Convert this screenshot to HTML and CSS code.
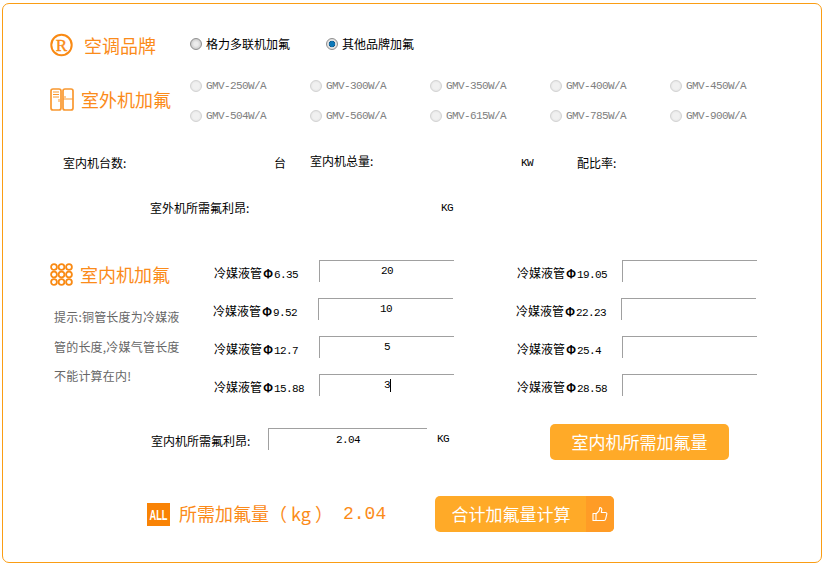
FILE: index.html
```html
<!DOCTYPE html>
<html lang="zh-CN">
<head>
<meta charset="utf-8">
<title>加氟量计算</title>
<link rel="stylesheet" href="styles.css">
</head>
<body>
<main class="card">
  <section class="brand-row">
    <div class="head">
      <svg class="icon" width="23" height="24" viewBox="0 0 23 24"><circle cx="11.5" cy="12" r="10.2" fill="none" stroke="#f98a14" stroke-width="2"/><text class="icon-r" x="11.5" y="18" text-anchor="middle">R</text></svg>
      <h2 class="title title-brand">空调品牌</h2>
    </div>
    <label class="choice choice-first"><input class="radio" type="radio" name="brand"><span>格力多联机加氟</span></label>
    <label class="choice"><input class="radio" type="radio" name="brand" checked><span>其他品牌加氟</span></label>
  </section>

  <section class="outdoor">
    <div class="head">
      <svg class="icon" width="24" height="23" viewBox="0 0 24 23"><g fill="none" stroke="#f9982f" stroke-width="1.7"><rect x="1" y="1" width="10" height="21" rx="2"/><rect x="13" y="1" width="10" height="21" rx="2"/><path d="M3 4h6M3 6.5h6M3 9h6M13 11h10M9 11v3M15 8v2" stroke-width="1"/></g></svg>
      <h2 class="title">室外机加氟</h2>
    </div>
    <div class="models">
      <label class="model"><input class="radio" type="radio" disabled><span>GMV-250W/A</span></label>
      <label class="model"><input class="radio" type="radio" disabled><span>GMV-300W/A</span></label>
      <label class="model"><input class="radio" type="radio" disabled><span>GMV-350W/A</span></label>
      <label class="model"><input class="radio" type="radio" disabled><span>GMV-400W/A</span></label>
      <label class="model"><input class="radio" type="radio" disabled><span>GMV-450W/A</span></label>
      <label class="model"><input class="radio" type="radio" disabled><span>GMV-504W/A</span></label>
      <label class="model"><input class="radio" type="radio" disabled><span>GMV-560W/A</span></label>
      <label class="model"><input class="radio" type="radio" disabled><span>GMV-615W/A</span></label>
      <label class="model"><input class="radio" type="radio" disabled><span>GMV-785W/A</span></label>
      <label class="model"><input class="radio" type="radio" disabled><span>GMV-900W/A</span></label>
    </div>
  </section>

  <section class="stats">
    <span class="stat-label">室内机台数:</span>
    <span class="stat-unit">台</span>
    <span class="stat-label raised">室内机总量:</span>
    <span class="stat-unit-kw mono">KW</span>
    <span>配比率:</span>
  </section>

  <section class="need">
    <span class="need-label">室外机所需氟利昂:</span>
    <span class="mono">KG</span>
  </section>

  <section class="indoor">
    <div class="side">
      <div class="head">
        <svg class="icon" width="23" height="23" viewBox="0 0 23 23"><g fill="none" stroke="#f98a14" stroke-width="1.8"><circle cx="4" cy="4" r="2.9"/><circle cx="11.5" cy="4" r="2.9"/><circle cx="19" cy="4" r="2.9"/><circle cx="4" cy="11.5" r="2.9"/><circle cx="11.5" cy="11.5" r="2.9"/><circle cx="19" cy="11.5" r="2.9"/><circle cx="4" cy="19" r="2.9"/><circle cx="11.5" cy="19" r="2.9"/><circle cx="19" cy="19" r="2.9"/></g></svg>
        <h2 class="title">室内机加氟</h2>
      </div>
      <p class="hint">提示:铜管长度为冷媒液<br>管的长度,冷媒气管长度<br>不能计算在内!</p>
    </div>
    <div class="pipes">
      <div class="pipe"><span class="pipe-label">冷媒液管<span class="phi">Φ</span><span class="mono">6.35</span></span><input class="field" value="20"></div>
      <div class="pipe"><span class="pipe-label">冷媒液管<span class="phi">Φ</span><span class="mono">19.05</span></span><input class="field"></div>
      <div class="pipe shift"><span class="pipe-label">冷媒液管<span class="phi">Φ</span><span class="mono">9.52</span></span><input class="field" value="10"></div>
      <div class="pipe shift"><span class="pipe-label">冷媒液管<span class="phi">Φ</span><span class="mono">22.23</span></span><input class="field"></div>
      <div class="pipe"><span class="pipe-label">冷媒液管<span class="phi">Φ</span><span class="mono">12.7</span></span><input class="field" value="5"></div>
      <div class="pipe"><span class="pipe-label">冷媒液管<span class="phi">Φ</span><span class="mono">25.4</span></span><input class="field"></div>
      <div class="pipe"><span class="pipe-label">冷媒液管<span class="phi">Φ</span><span class="mono">15.88</span></span><span class="field-wrap"><input class="field" value="3"><span class="caret"></span></span></div>
      <div class="pipe"><span class="pipe-label">冷媒液管<span class="phi">Φ</span><span class="mono">28.58</span></span><input class="field"></div>
    </div>
  </section>

  <section class="result">
    <span class="result-label">室内机所需氟利昂:</span>
    <input class="field field-wide" value="2.04">
    <span class="result-unit mono">KG</span>
    <button class="btn" type="button">室内机所需加氟量</button>
  </section>

  <section class="total">
    <svg class="icon-all" width="23" height="23" viewBox="0 0 23 23"><rect width="23" height="23" fill="#f98305"/><text class="all-text" text-anchor="middle" transform="translate(11.5 17) scale(.62 1)">ALL</text></svg>
    <h2 class="title total-title">所需加氟量（ kg ）</h2>
    <span class="total-value">2.04</span>
    <button class="btn btn-split" type="button">
      <span class="btn-text">合计加氟量计算</span>
      <span class="btn-thumb"><svg width="16" height="16" viewBox="0 0 16 16"><path d="M1 7.5h3v7H1zM4 8l3-3.2.8-3.3c1.6 0 2.2 1.2 1.9 2.7L9.3 6.5h4.2c1 0 1.5.8 1.3 1.7l-1.2 5c-.2.8-.8 1.3-1.6 1.3H4" fill="none" stroke="#fff" stroke-width="1.1" stroke-linejoin="round"/></svg></span>
    </button>
  </section>
</main>
</body>
</html>
```
FILE: styles.css
```css
* { box-sizing: border-box; }
html, body { margin: 0; padding: 0; background: #fff; }
body { font: 12px/26px "Noto Sans CJK SC", "Liberation Sans", sans-serif; color: #000; }

.card {
  width: 820px;
  height: 560px;
  margin: 3px 0 0 2px;
  padding-top: 28px;
  border: 1px solid #fa9d14;
  border-radius: 7px;
  display: flex;
  flex-direction: column;
}

.mono {
  font-family: "Liberation Mono", monospace;
  font-size: 11px;
  letter-spacing: -0.6px;
}

.head { display: flex; align-items: center; }
.title {
  margin: 0 0 0 7px;
  font-size: 18px;
  font-weight: 400;
  line-height: 24px;
  color: #fb8b1a;
  white-space: nowrap;
}
.title-brand { margin-left: 11px; }

.radio {
  appearance: none;
  flex: none;
  width: 12px;
  height: 12px;
  margin: 0;
  border: 1px solid #8f8f8f;
  border-radius: 50%;
  background: radial-gradient(circle, #ececec 0 2px, #b8b8b8 100%);
}
.radio:checked { background: radial-gradient(circle, #0b78b8 0 2.5px, #1c4f78 3px, #e8e8e8 3.6px, #cfcfcf 100%); }
.radio:disabled { border-color: #d2d2d2; background: radial-gradient(circle, #f0f0f0 0 3px, #dedede 100%); }

.brand-row { display: flex; align-items: center; height: 25px; padding-left: 47px; }
.brand-row .head { width: 140px; }
.choice { display: flex; align-items: center; gap: 4px; width: 136px; margin-bottom: 2px; }

.outdoor { display: flex; align-items: center; height: 60px; margin-top: 14px; padding-left: 47px; }
.outdoor .head { width: 140px; margin-bottom: 4px; }
.models { display: grid; grid-template-columns: repeat(5, 120px); grid-auto-rows: 30px; }
.model { display: flex; align-items: center; gap: 4px; color: #808080; font-family: "Liberation Mono", monospace; font-size: 11px; letter-spacing: -0.6px; }

.stats { display: flex; height: 26px; margin-top: 19px; padding-left: 60px; }
.stat-label { width: 211px; }
.stat-unit { width: 36px; }
.stat-unit-kw { width: 56px; }
.raised { margin-top: -2px; }

.need { display: flex; height: 26px; margin-top: 19px; padding-left: 147px; }
.need-label { width: 291px; }

.indoor { display: flex; margin-top: 39px; padding-left: 47px; }
.side { width: 164px; }
.side .head { height: 28px; }
.hint { margin: 14px 0 0 4px; color: #666; line-height: 29.5px; letter-spacing: .2px; white-space: nowrap; }
.pipes { display: grid; grid-template-columns: repeat(2, 303px); grid-auto-rows: 38px; }
.pipe { display: flex; align-items: flex-start; }
.shift { margin-left: -1px; }
.pipe-label { flex: none; width: 105px; white-space: nowrap; }
.phi { display: inline-block; width: 12px; text-align: center; font-weight: 700; font-size: 12px; }

.field {
  display: block;
  flex: none;
  width: 135px;
  height: 22px;
  padding: 0 0 2px;
  border: 0;
  border-top: 1px solid #a0a0a0;
  border-left: 1px solid #a0a0a0;
  background: #fff;
  outline: none;
  text-align: center;
  font-family: "Liberation Mono", monospace;
  font-size: 11px;
  letter-spacing: -0.6px;
  color: #000;
}
.field-wrap { position: relative; display: block; flex: none; }
.caret { position: absolute; left: 71px; top: 5px; width: 1px; height: 13px; background: #000; }

.result { display: flex; align-items: flex-start; height: 36px; margin-top: 12px; padding-left: 148px; }
.result-label { width: 117px; margin-top: 4px; }
.field-wide { width: 159px; margin-top: 4px; padding-bottom: 0; }
.result-unit { width: 113px; margin: 2px 0 0 10px; }

.btn {
  display: block;
  width: 179px;
  height: 36px;
  padding: 0;
  border: 0;
  border-radius: 5px;
  background: #ffaa28;
  color: #fff;
  font: 17px/36px "Noto Sans CJK SC", sans-serif;
}

.total { display: flex; align-items: center; height: 36px; margin-top: 36px; padding-left: 144px; }
.icon-all { flex: none; margin-right: 2px; }
.total-title { width: 164px; margin-bottom: 2px; }
.total-value {
  width: 92px;
  font-family: "Liberation Mono", monospace;
  font-size: 18px;
  color: #fb8b1a;
}
.btn-split { display: flex; overflow: hidden; }
.btn-text { width: 151px; padding-left: 1px; text-align: center; }
.btn-thumb { display: flex; align-items: center; justify-content: center; width: 28px; height: 36px; background: #ff9c26; }

.icon-r { font: 400 17px "Liberation Serif", serif; fill: #f98a14; stroke: #f98a14; stroke-width: .4; }
.all-text { font: 700 15px "Liberation Sans", sans-serif; fill: #fff; }
```
